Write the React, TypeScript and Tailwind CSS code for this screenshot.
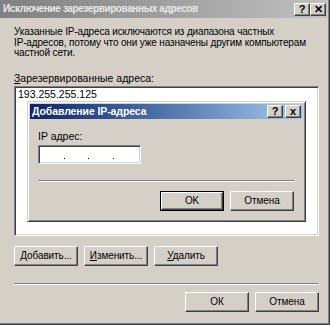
const raised =
  'border border-t-white border-l-white border-r-[#404040] border-b-[#404040] shadow-[inset_-1px_-1px_#808080]';
const sunken =
  'border border-t-[#808080] border-l-[#808080] border-r-white border-b-white shadow-[inset_1px_1px_#404040,inset_-1px_-1px_#d4d0c8]';

function CaptionButton({ glyph }: { glyph: string }) {
  return (
    <div
      className={`w-[16px] h-[13px] bg-[#d4d0c8] ${raised} flex items-center justify-center text-[11px] font-bold leading-none text-black`}
    >
      {glyph}
    </div>
  );
}

function Button({
  children,
  def,
  className = '',
}: {
  children: React.ReactNode;
  def?: boolean;
  className?: string;
}) {
  if (def) {
    return (
      <div className={`border border-black ${className}`}>
        <div className={`h-full bg-[#d4d0c8] ${raised} flex items-center justify-center text-[10px] tracking-[-0.1px]`}>
          {children}
        </div>
      </div>
    );
  }
  return (
    <div className={`bg-[#d4d0c8] ${raised} flex items-center justify-center text-[10px] tracking-[-0.1px] whitespace-nowrap ${className}`}>
      {children}
    </div>
  );
}

function Etched({ className = '' }: { className?: string }) {
  return <div className={`h-[2px] border-t border-t-[#808080] border-b border-b-white ${className}`} />;
}

function AddIpDialog() {
  return (
    <div
      className={`absolute left-[12px] top-[14px] w-[279px] h-[121px] bg-[#d4d0c8] p-[1px] border border-t-[#d4d0c8] border-l-[#d4d0c8] border-r-[#404040] border-b-[#404040] shadow-[inset_1px_1px_white,inset_-1px_-1px_#808080] flex flex-col`}
    >
      <div className="h-[15px] m-[1px] bg-gradient-to-r from-[#0a246a] to-[#a6caf0] flex items-center justify-between pl-[2px] pr-[2px]">
        <span className="text-white font-bold text-[10.5px] tracking-[-0.1px] leading-none">Добавление IP-адреса</span>
        <div className="flex gap-[2px]">
          <CaptionButton glyph="?" />
          <CaptionButton glyph="x" />
        </div>
      </div>
      <div className="flex flex-col pl-[9px] pr-[10px]">
        <div className="mt-[10px] text-[10.5px] leading-[13px]">IP адрес:</div>
        <div className={`mt-[2px] w-[103px] h-[19px] bg-white ${sunken} flex items-end pb-[4px]`}>
          <span className="ml-[25px] w-[1px] h-[1px] bg-black" />
          <span className="ml-[23px] w-[1px] h-[1px] bg-black" />
          <span className="ml-[24px] w-[1px] h-[1px] bg-black" />
        </div>
        <Etched className="mt-[16px]" />
        <div className="mt-[9px] flex justify-end gap-[6px]">
          <Button def className="w-[64px] h-[20px]">OK</Button>
          <Button className="w-[64px] h-[20px]">Отмена</Button>
        </div>
      </div>
    </div>
  );
}

export default function App() {
  return (
    <div
      className="w-[330px] h-[325px] bg-[#d4d0c8] overflow-hidden text-black border-r border-r-[#404040] border-b border-b-[#404040] shadow-[inset_-1px_-1px_#808080]"
      style={{ fontFamily: '"Liberation Sans", Arial, sans-serif' }}
    >
      <div className="h-[18px] mr-[2px] bg-gradient-to-r from-[#808080] to-[#c0c0c0] flex items-center justify-between pl-[3px] pr-[1px]">
        <span className="text-[#e8e8e8] font-bold text-[10px] tracking-[-0.4px] leading-none">
          Исключение зарезервированных адресов
        </span>
        <div className="flex gap-[0px]">
          <CaptionButton glyph="?" />
          <CaptionButton glyph="✕" />
        </div>
      </div>

      <div className="flex flex-col pl-[14px] pr-[10px]">
        <div className="mt-[9px] text-[10px] tracking-[-0.15px] leading-[10.5px] whitespace-nowrap">
          Указанные IP-адреса исключаются из диапазона частных
          <br />
          IP-адресов, потому что они уже назначены другим компьютерам
          <br />
          частной сети.
        </div>

        <div className="mt-[13px] text-[10.5px] leading-[13px]">
          <span className="underline">З</span>арезервированные адреса:
        </div>

        <div className={`relative mt-[1px] w-[305px] h-[150px] bg-white ${sunken} pl-[3px] pt-[1px]`}>
          <div className="text-[10.5px] leading-[13px]">193.255.255.125</div>
          <AddIpDialog />
        </div>

        <div className="mt-[10px] flex gap-[6px]">
          <Button className="w-[64px] h-[20px]">
            <span><span className="underline">Д</span>обавить...</span>
          </Button>
          <Button className="w-[64px] h-[20px]">
            <span><span className="underline">И</span>зменить...</span>
          </Button>
          <Button className="w-[64px] h-[20px]">
            <span><span className="underline">У</span>далить</span>
          </Button>
        </div>

        <Etched className="mt-[17px] w-[304px]" />

        <div className="mt-[7px] w-[305px] flex justify-end gap-[6px]">
          <Button className="w-[64px] h-[20px]">ОК</Button>
          <Button className="w-[64px] h-[20px]">Отмена</Button>
        </div>
      </div>
    </div>
  );
}
